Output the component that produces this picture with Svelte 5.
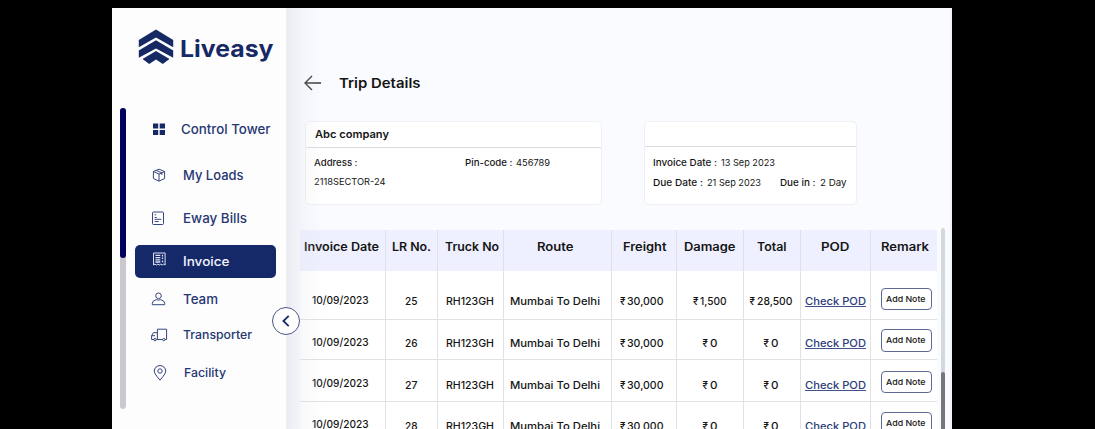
<script>
  // Stretches a label horizontally so that it occupies the given width in pixels.
  function fit(node, width) {
    const apply = (w) => {
      node.style.display = 'inline-block';
      node.style.transform = 'none';
      node.style.marginRight = '0px';
      const natural = node.getBoundingClientRect().width;
      node.style.transformOrigin = '0 50%';
      node.style.transform = `scaleX(${w / natural})`;
      node.style.marginRight = w - natural + 'px';
    };
    apply(width);
    return { update: apply };
  }

  const nav = [
    { label: 'Control Tower', icon: 'grid', w: 89.5, indent: 46.5, gap: 0, size: 13 },
    { label: 'My Loads', icon: 'box', w: 60.5, indent: 48.5, gap: 22, size: 13 },
    { label: 'Eway Bills', icon: 'bill', w: 64, indent: 48, gap: 19, size: 13 },
    { label: 'Invoice', icon: 'invoice', w: 46.5, indent: 48, gap: 15, size: 12.8, active: true },
    { label: 'Team', icon: 'team', w: 35, indent: 48.5, gap: 9, size: 13 },
    { label: 'Transporter', icon: 'truck', w: 69, indent: 48.5, gap: 12, size: 12 },
    { label: 'Facility', icon: 'pin', w: 42, indent: 49.5, gap: 14, size: 12 }
  ];

  const columns = [
    { label: 'Invoice Date', w: 75, shift: -1.5 },
    { label: 'LR No.', w: 39, shift: 0 },
    { label: 'Truck No', w: 54, shift: 1 },
    { label: 'Route', w: 36.5, shift: -2.5 },
    { label: 'Freight', w: 43.5, shift: 1 },
    { label: 'Damage', w: 51.5, shift: -0.5 },
    { label: 'Total', w: 29.5, shift: -0.5 },
    { label: 'POD', w: 28.5, shift: 0 },
    { label: 'Remark', w: 48, shift: 0.5 }
  ];

  const rows = [
    { lr: '25', damage: ['1,500', 26.5], total: ['28,500', 35.5], h: 49, date: 22, pad: 23, btn: 16.5 },
    { lr: '26', damage: ['0', 7.5], total: ['0', 7.5], h: 40, date: 14.5, pad: 16, btn: 9 },
    { lr: '27', damage: ['0', 7.5], total: ['0', 7.5], h: 42, date: 15.5, pad: 17.5, btn: 10.5 },
    { lr: '28', damage: ['0', 7.5], total: ['0', 7.5], h: 42, date: 14.5, pad: 17, btn: 10 }
  ];
</script>

{#snippet amount(value, w)}
  <span class="rupee">₹</span><span use:fit={w}>{value}</span>
{/snippet}

<div class="app">
  <aside>
    <div class="logo">
      <svg width="36" height="37" viewBox="0 0 36 37" fill="#172965">
        <path d="M18 0.5L35.2 11V18.3L18 8.6L0.8 18.3V11Z" />
        <path d="M18 11.3L35.2 21.5V28.8L18 19.4L0.8 28.8V21.5Z" />
        <path d="M18 22L31.5 30L24.8 35L18 30.5L11.2 35L4.5 30Z" />
      </svg>
      <span class="brand"><span use:fit={93.5}>Liveasy</span></span>
    </div>
    <div class="side-body">
      <div class="side-scroll"><div></div></div>
      <nav>
        {#each nav as item}
          <a class:active={item.active} style="margin-top:{item.gap}px">
            <span class="icon" style="width:{item.indent}px">
              {#if item.icon === 'grid'}
                <svg width="16" height="16" viewBox="0 0 16 16" fill="#172965"><path d="M2 2.5h5.2v5H2zM8.7 2.5H14v5H8.7zM2 9h5.2v5H2zM8.7 9H14v5H8.7z" /></svg>
              {:else if item.icon === 'box'}
                <svg width="16" height="16" viewBox="0 0 16 16"><path d="M8 2.2L13.6 4.5V11.5L8 14.2L2.4 11.5V4.5ZM2.4 4.5L8 7.1L13.6 4.5M8 7.1V14.2M5.1 3.4L10.8 5.8V8" /></svg>
              {:else if item.icon === 'bill'}
                <svg width="16" height="16" viewBox="0 0 16 16" class="nudge"><rect x="2.5" y="2" width="11" height="12.5" rx="1" /><path d="M4.7 4.8h1.5M4.7 7.5h2M4.7 9.3h6.6M4.7 11.5h4" /></svg>
              {:else if item.icon === 'invoice'}
                <svg width="16" height="16" viewBox="0 0 16 16" class="raised"><path d="M2.5 2h11.6v12l-1.45-.9-1.45.9-1.45-.9-1.45.9-1.45-.9-1.45.9-1.45-.9-1.4.9z" /><path d="M4.4 4.4h4.9M4.4 6.6h4.9M4.4 8.8h4.9M4.4 11h4.9M11.5 3.8v1.7M11.5 6.5V8M11.5 9.6v1.6" stroke-width="1.3" /></svg>
              {:else if item.icon === 'team'}
                <svg width="16" height="16" viewBox="0 0 16 16" class="nudge"><circle cx="8.5" cy="4.8" r="2.8" /><path d="M2.3 13.7v-1.5q0-2.6 4.2-3.6q2 1.2 4 0q4.2 1 4.2 3.6v1.5z" /></svg>
              {:else if item.icon === 'truck'}
                <svg width="18" height="16" viewBox="0 0 18 16" class="nudge"><path d="M4 12.5H1.6V8.7L3.4 5.7H7.4M1.6 8.7H5M7.4 12.5V2.2H16.6V12.5H15M7.4 12.5H6M7.4 12.5h5" /><circle cx="5" cy="12.6" r="1.2" /><circle cx="13.8" cy="12.6" r="1.2" /></svg>
              {:else}
                <svg width="16" height="18" viewBox="0 0 16 18" class="right"><path d="M8 16.2C4.5 12 2.3 9.3 2.3 7A5.7 5.4 0 0 1 13.7 7C13.7 9.3 11.5 12 8 16.2Z" /><circle cx="8" cy="7" r="2.2" /></svg>
              {/if}
            </span>
            <span class="label" style="font-size:{item.size}px"><span use:fit={item.w}>{item.label}</span></span>
          </a>
        {/each}
      </nav>
    </div>
    <button class="collapse" aria-label="Collapse">
      <svg width="12" height="14" viewBox="0 0 12 14"><path d="M8.7 1.8L3.4 7L8.7 12.2" stroke-width="1.8" /></svg>
    </button>
  </aside>

  <main>
    <header>
      <svg width="18" height="16" viewBox="0 0 18 16"><path d="M8 1L1 8L8 15M1 8H17" stroke="#333" stroke-width="1.4" /></svg>
      <h1><span use:fit={81.5}>Trip Details</span></h1>
    </header>

    <div class="cards">
      <section class="company">
        <h2><span use:fit={74}>Abc company</span></h2>
        <div class="facts">
          <div><b use:fit={43.5}>Address :</b></div>
          <div><b use:fit={47.5}>Pin-code :</b><span class="value"><span use:fit={34}>456789</span></span></div>
          <div><span use:fit={71.5}>2118SECTOR-24</span></div>
        </div>
      </section>
      <section class="dates">
        <h2></h2>
        <div class="lines">
          <div><b use:fit={64}>Invoice Date :</b><span class="value"><span use:fit={54}>13 Sep 2023</span></span></div>
          <div class="due">
            <div><b use:fit={50}>Due Date :</b><span class="value"><span use:fit={54}>21 Sep 2023</span></span></div>
            <div><b use:fit={35.5}>Due in :</b><span class="value"><span use:fit={26.5}>2 Day</span></span></div>
          </div>
        </div>
      </section>
    </div>

    <div class="listing">
      <div class="table">
        <div class="row head">
          {#each columns as col}
            <div><span style="margin-left:{col.shift * 2}px"><span use:fit={col.w}>{col.label}</span></span></div>
          {/each}
        </div>
        {#each rows as row}
          <div class="row" style="height:{row.h}px; --pad:{row.pad}px">
            <div class="date" style="padding-top:{row.date}px"><span use:fit={56.5}>10/09/2023</span></div>
            <div><span use:fit={12.5}>{row.lr}</span></div>
            <div class="truck"><span use:fit={48}>RH123GH</span></div>
            <div class="route"><span use:fit={90}>Mumbai To Delhi</span></div>
            <div class="freight">{@render amount('30,000', 36.5)}</div>
            <div>{@render amount(row.damage[0], row.damage[1])}</div>
            <div class="total">{@render amount(row.total[0], row.total[1])}</div>
            <div><span class="pod"><span use:fit={61}>Check POD</span></span></div>
            <div style="padding-top:{row.btn}px"><button class="note"><span use:fit={39.5}>Add Note</span></button></div>
          </div>
        {/each}
      </div>
      <div class="scroll"><div></div></div>
    </div>
    <div class="shade"></div>
  </main>
</div>

<style>
  :global(body) { background: #000; overflow: hidden; }
  .app {
    display: flex;
    width: 840px;
    height: 421px;
    margin: 8px 0 0 112px;
    overflow: hidden;
    background: #fafbff;
    color: #151515;
    font-family: Inter, "Open Sans", sans-serif;
    white-space: nowrap;
  }
  svg { display: block; flex: none; }
  aside {
    position: relative;
    z-index: 2;
    flex: none;
    width: 174px;
    background: #fdfdfe;
  }
  .logo { box-sizing: border-box; display: flex; padding: 21px 0 0 26px; height: 100px; gap: 6px; }
  .brand { font-size: 23px; line-height: 41px; font-weight: 650; color: #172965; }
  .side-body { display: flex; padding-left: 8px; }
  .side-scroll { width: 6px; height: 301px; border-radius: 3px; background: #c9c9cf; }
  .side-scroll div { height: 150px; border-radius: 3px; background: #00005f; }
  nav { width: 141px; margin-left: 8.5px; padding-top: 9px; }
  nav a {
    display: flex;
    align-items: center;
    height: 24px;
    color: #263772;
    font-weight: 450;
  }
  nav a.active { height: 33px; border-radius: 5px; background: #152968; color: #f3f5ff; }
  .label { line-height: 16px; }
  .icon { box-sizing: border-box; flex: none; padding-left: 16.5px; }
  .icon svg:not([fill]) { fill: none; stroke: #36457b; stroke-width: 1; }
  .icon svg.nudge { margin-left: -1px; }
  .icon svg.right { margin-left: 0.5px; }
  .icon svg.raised { margin: -6px 0 0 -0.5px; stroke: #dfe3f5; }
  .collapse {
    position: absolute;
    left: 160px;
    top: 299px;
    width: 28px;
    height: 28px;
    padding: 0;
    display: grid;
    place-items: center;
    border: 1px solid #4b5886;
    border-radius: 50%;
    background: #fff;
  }
  .collapse svg { fill: none; stroke: #172965; }
  main { position: relative; flex: 1; box-sizing: border-box; padding-left: 14px; border-right: 2px solid #f3f4fa; }
  header { display: flex; align-items: center; height: 26px; padding: 62px 0 0 4px; gap: 16.5px; }
  header svg { fill: none; }
  h1 { margin: 0; font-size: 13.6px; line-height: 18px; font-weight: 600; }
  .cards { display: flex; gap: 42px; padding: 25px 0 0 5px; height: 84px; }
  section { box-sizing: border-box; height: 84px; border: 1px solid #eef0f4; border-radius: 5px; background: #fff; font-size: 9.4px; line-height: 12px; }
  section b { font-weight: 550; }
  .value { margin-left: 4px; }
  .company { width: 297px; }
  .dates { width: 213px; }
  h2 { height: 25px; margin: 0; border-bottom: 1px solid #d9dbdf; font-size: 10.8px; line-height: 25px; font-weight: 600; }
  .company h2 { padding-left: 9px; }
  .facts { display: grid; grid-template-columns: 150.5px 1fr; row-gap: 6.5px; padding: 9px 0 0 8px; }
  .dates h2 { height: 24px; }
  .lines { display: flex; flex-direction: column; gap: 8px; padding: 10px 0 0 7.5px; }
  .due { display: flex; gap: 19.5px; }
  .listing { display: flex; padding-top: 23px; gap: 4px; }
  .table { width: 637px; padding-top: 2px; }
  .row { display: grid; grid-template-columns: 86px 52px 66px 108px 65px 67px 57px 70px 66px; background: #fff; }
  .row > div {
    box-sizing: border-box;
    display: flex;
    justify-content: center;
    align-items: flex-start;
    padding-top: var(--pad);
    border-right: 1px solid #dfe1e5;
    border-bottom: 1px solid #dfe1e5;
    font-size: 10.8px;
    line-height: 15px;
    font-weight: 450;
  }
  .row > div:last-child { border-right: 0; }
  .row.head { height: 41px; background: #eef0ff; }
  .row.head > div { padding-top: 10px; border-bottom: 0; font-size: 11.3px; font-weight: 600; }
  .row .date { padding-right: 4px; }
  .row .route { padding-right: 5px; }
  .row .truck { padding-right: 2px; }
  .row .freight { padding-right: 4px; }
  .row .total { padding-right: 2px; }
  .rupee { margin-right: 2px; font-size: 9.8px; }
  .pod { height: 12px; border-bottom: 1px solid #44528a; color: #2c3d7a; }
  .note {
    width: 51px;
    height: 22.5px;
    margin-left: 4px;
    padding: 0;
    border: 1px solid #5d6a94;
    border-radius: 4px;
    background: #fff;
    color: #151515;
    font: 500 8.2px/20px Inter, sans-serif;
  }
  .scroll { width: 4px; height: 201px; background: #d5d8da; border-radius: 2px 2px 0 0; overflow: hidden; }
  .scroll div { height: 60px; margin-top: 144px; background: #75777b; border-radius: 2px; }
  .shade {
    position: absolute;
    left: 0;
    top: 0;
    width: 38px;
    height: 100%;
    background: linear-gradient(90deg, rgba(205, 209, 218, 0.34), rgba(220, 223, 230, 0.18) 45%, rgba(230, 232, 240, 0));
    pointer-events: none;
  }
</style>
